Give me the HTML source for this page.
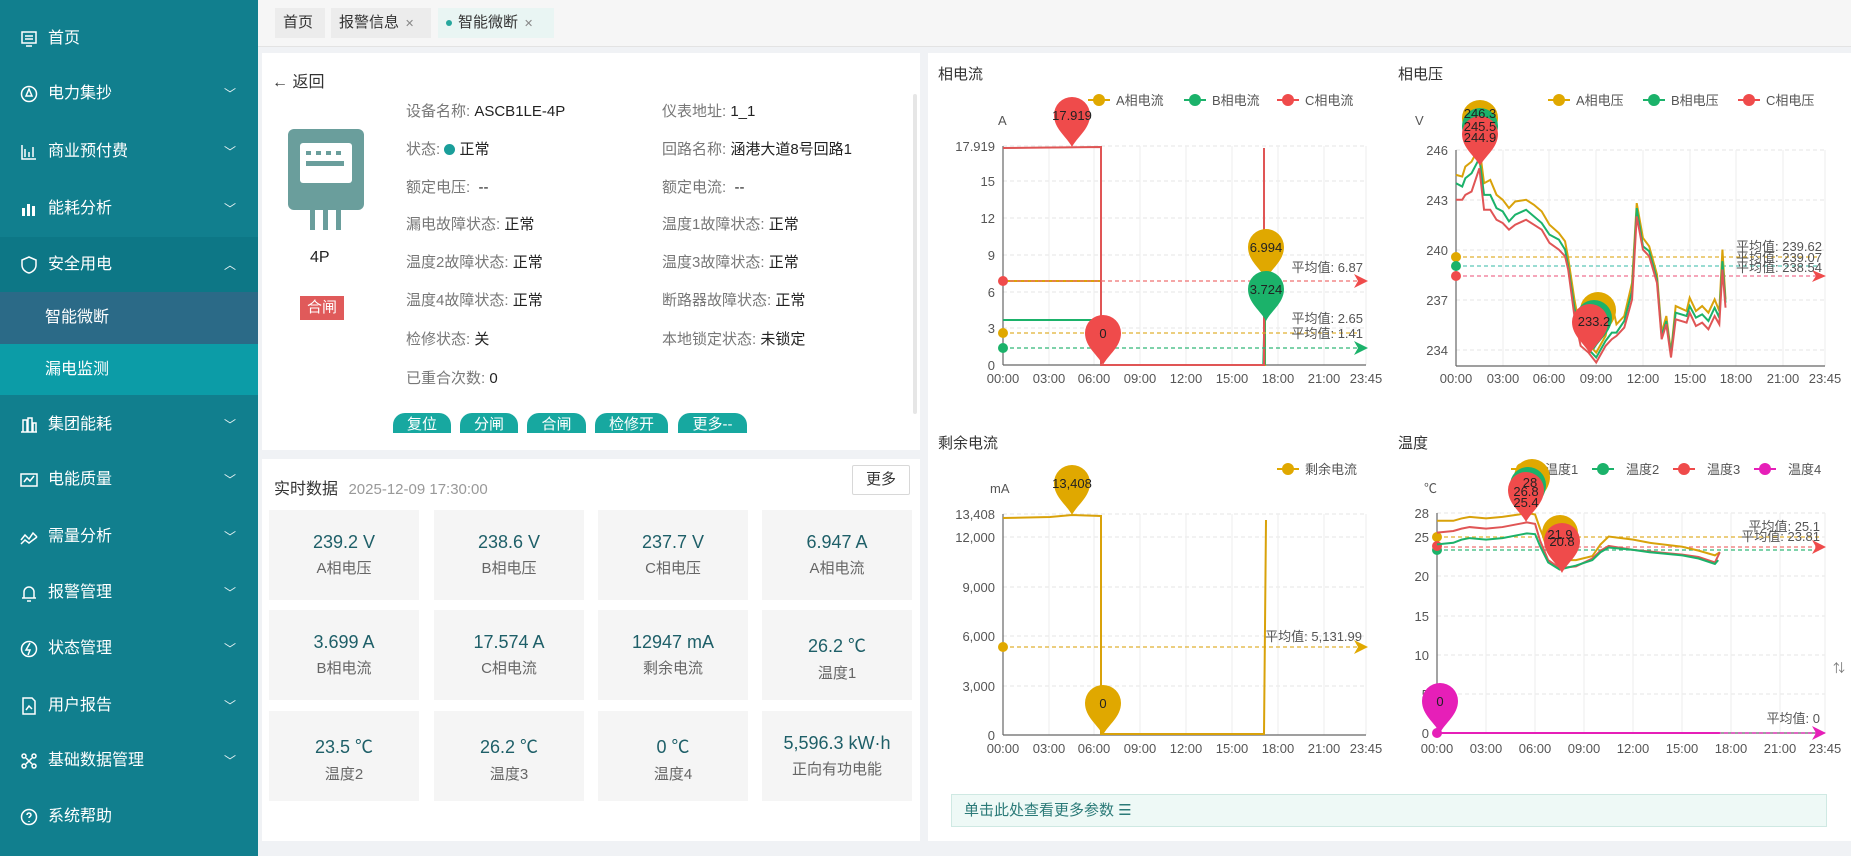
<!DOCTYPE html>
<html><head><meta charset="utf-8">
<style>
*{margin:0;padding:0;box-sizing:border-box}
body{width:1851px;height:856px;overflow:hidden;background:#f0f2f5;font-family:"Liberation Sans","Noto Sans CJK SC",sans-serif;position:relative;color:#333}
.abs{position:absolute}
#side{left:0;top:0;width:258px;height:856px;background:#117f8e}
.mi{position:absolute;left:0;width:258px;height:56px;color:#fff;font-size:16px;line-height:56px;padding-left:48px}
.mi .ic{position:absolute;left:20px;top:19px;width:18px;height:18px}
.mi .ar{position:absolute;right:22px;top:0;font-size:12px;color:#e8f4f5}
.tab{position:absolute;top:8px;height:30px;line-height:30px;font-size:15px;background:#ececec;color:#333;padding:0 8px}
.tab small{font-size:11px;color:#888;margin-left:6px}
.panel{position:absolute;background:#fff}
.lb{position:absolute;font-size:15px;color:#777;white-space:nowrap}
.lb b{font-weight:normal;color:#222}
.btn{position:absolute;top:413px;height:20px;background:#17a8a0;color:#fff;font-size:15px;line-height:24px;text-align:center;border-radius:12px 12px 0 0;overflow:hidden}
.card{position:absolute;width:150px;height:90px;background:#f5f5f5;text-align:center}
.card .v{margin-top:22px;font-size:18px;color:#1e5f68}
.card .l{margin-top:4px;font-size:15px;color:#666}
svg text{font-family:"Liberation Sans","Noto Sans CJK SC",sans-serif}
</style></head><body>

<div id="side" class="abs">
  <div class="abs" style="left:0;top:237px;width:258px;height:56px;background:#0d7786"></div>
  <div class="abs" style="left:0;top:292px;width:258px;height:52px;background:#2b6a87"></div>
  <div class="abs" style="left:0;top:344px;width:258px;height:51px;background:#0c9ca7"></div>
  <div class="mi" style="top:11px"><svg class="ic" viewBox="0 0 18 18" fill="none" stroke="#fff" stroke-width="1.5"><rect x="2" y="2" width="14" height="11"/><path d="M6 16h6M5 6h8M5 9h8"/></svg>首页</div>
  <div class="mi" style="top:66px"><svg class="ic" viewBox="0 0 18 18" fill="none" stroke="#fff" stroke-width="1.5"><circle cx="9" cy="9" r="7.5"/><path d="M9 4l-3 7h6z"/></svg>电力集抄<span class="ar">﹀</span></div>
  <div class="mi" style="top:124px"><svg class="ic" viewBox="0 0 18 18" fill="none" stroke="#fff" stroke-width="1.5"><path d="M2 2v14h14M5 14V6M9 14V9M13 14V4"/></svg>商业预付费<span class="ar">﹀</span></div>
  <div class="mi" style="top:181px"><svg class="ic" viewBox="0 0 18 18" fill="#fff"><rect x="2" y="8" width="3" height="8"/><rect x="7" y="4" width="3" height="12"/><rect x="12" y="6" width="3" height="10"/></svg>能耗分析<span class="ar">﹀</span></div>
  <div class="mi" style="top:237px"><svg class="ic" viewBox="0 0 18 18" fill="none" stroke="#fff" stroke-width="1.5"><path d="M9 1l7 3v5c0 4-3 7-7 8-4-1-7-4-7-8V4z"/></svg>安全用电<span class="ar">︿</span></div>
  <div class="mi" style="top:292px;height:52px;line-height:52px;padding-left:45px">智能微断</div>
  <div class="mi" style="top:344px;height:51px;line-height:51px;padding-left:45px">漏电监测</div>
  <div class="mi" style="top:397px"><svg class="ic" viewBox="0 0 18 18" fill="none" stroke="#fff" stroke-width="1.5"><path d="M1 16h16M3 16V4h4v12M8 16V2h4v14M13 16V7h3v9"/></svg>集团能耗<span class="ar">﹀</span></div>
  <div class="mi" style="top:452px"><svg class="ic" viewBox="0 0 18 18" fill="none" stroke="#fff" stroke-width="1.5"><rect x="1" y="3" width="16" height="12"/><path d="M4 11l3-4 3 3 4-5"/></svg>电能质量<span class="ar">﹀</span></div>
  <div class="mi" style="top:509px"><svg class="ic" viewBox="0 0 18 18" fill="none" stroke="#fff" stroke-width="1.5"><path d="M1 12l4-5 4 4 4-6 4 4M1 16l4-4 4 3 8-6"/></svg>需量分析<span class="ar">﹀</span></div>
  <div class="mi" style="top:565px"><svg class="ic" viewBox="0 0 18 18" fill="none" stroke="#fff" stroke-width="1.5"><path d="M4 14V8a5 5 0 0110 0v6M2 14h14M7 17h4"/></svg>报警管理<span class="ar">﹀</span></div>
  <div class="mi" style="top:621px"><svg class="ic" viewBox="0 0 18 18" fill="none" stroke="#fff" stroke-width="1.5"><circle cx="9" cy="9" r="7.5"/><path d="M10 3l-4 7h4l-2 5"/></svg>状态管理<span class="ar">﹀</span></div>
  <div class="mi" style="top:678px"><svg class="ic" viewBox="0 0 18 18" fill="none" stroke="#fff" stroke-width="1.5"><path d="M3 1h9l3 3v13H3z"/><path d="M6 13l3-4 3 3"/></svg>用户报告<span class="ar">﹀</span></div>
  <div class="mi" style="top:733px"><svg class="ic" viewBox="0 0 18 18" fill="none" stroke="#fff" stroke-width="1.5"><circle cx="4" cy="4" r="2"/><circle cx="14" cy="4" r="2"/><circle cx="4" cy="14" r="2"/><circle cx="14" cy="14" r="2"/><path d="M6 6l6 6M12 6l-6 6"/></svg>基础数据管理<span class="ar">﹀</span></div>
  <div class="mi" style="top:789px"><svg class="ic" viewBox="0 0 18 18" fill="none" stroke="#fff" stroke-width="1.5"><circle cx="9" cy="9" r="7.5"/><path d="M7 7a2 2 0 114 0c0 1.5-2 1.5-2 3M9 13v1"/></svg>系统帮助</div>
</div>

<div class="abs" style="left:258px;top:0;width:1593px;height:47px;background:#f6f6f6;border-bottom:1px solid #e3e3e3"></div>
<div class="tab" style="left:275px;width:50px">首页</div>
<div class="tab" style="left:331px;width:100px">报警信息<small>✕</small></div>
<div class="tab" style="left:438px;width:116px;background:#e9f5f3"><span style="display:inline-block;width:6px;height:6px;border-radius:3px;background:#27a79d;margin-right:6px;vertical-align:middle"></span>智能微断<small>✕</small></div>

<div class="panel" style="left:262px;top:53px;width:658px;height:397px"></div>
<div class="lb" style="left:272px;top:68px;color:#333;font-size:16px">← 返回</div>
<svg class="abs" style="left:288px;top:129px" width="76" height="102" viewBox="0 0 76 102">
  <rect x="0" y="0" width="76" height="81" rx="6" fill="#6a9e9c"/>
  <rect x="12" y="14" width="52" height="40" rx="3" fill="#fff"/>
  <rect x="18" y="22" width="5" height="4" fill="#6a9e9c"/><rect x="28" y="22" width="5" height="4" fill="#6a9e9c"/><rect x="38" y="22" width="5" height="4" fill="#6a9e9c"/><rect x="48" y="22" width="5" height="4" fill="#6a9e9c"/>
  <rect x="18" y="32" width="38" height="5" fill="#6a9e9c"/>
  <rect x="22" y="81" width="5" height="20" fill="#6a9e9c"/><rect x="35" y="81" width="5" height="20" fill="#6a9e9c"/><rect x="48" y="81" width="5" height="20" fill="#6a9e9c"/>
</svg>
<div class="lb" style="left:310px;top:249px;color:#222;font-size:16px">4P</div>
<div class="abs" style="left:300px;top:296px;width:44px;height:24px;background:#e05a5a;color:#fff;font-size:15px;line-height:24px;text-align:center">合闸</div>

<div class="lb" style="left:406px;top:100px">设备名称: <b>ASCB1LE-4P</b></div>
<div class="lb" style="left:662px;top:100px">仪表地址: <b>1_1</b></div>
<div class="lb" style="left:406px;top:138px">状态: <span style="display:inline-block;width:11px;height:11px;border-radius:6px;background:#1a9e9a;vertical-align:-1px"></span> <b>正常</b></div>
<div class="lb" style="left:662px;top:138px">回路名称: <b>涵港大道8号回路1</b></div>
<div class="lb" style="left:406px;top:176px">额定电压: &nbsp;<b>--</b></div>
<div class="lb" style="left:662px;top:176px">额定电流: &nbsp;<b>--</b></div>
<div class="lb" style="left:406px;top:213px">漏电故障状态: <b>正常</b></div>
<div class="lb" style="left:662px;top:213px">温度1故障状态: <b>正常</b></div>
<div class="lb" style="left:406px;top:251px">温度2故障状态: <b>正常</b></div>
<div class="lb" style="left:662px;top:251px">温度3故障状态: <b>正常</b></div>
<div class="lb" style="left:406px;top:289px">温度4故障状态: <b>正常</b></div>
<div class="lb" style="left:662px;top:289px">断路器故障状态: <b>正常</b></div>
<div class="lb" style="left:406px;top:328px">检修状态: <b>关</b></div>
<div class="lb" style="left:662px;top:328px">本地锁定状态: <b>未锁定</b></div>
<div class="lb" style="left:406px;top:367px">已重合次数: <b>0</b></div>
<div class="btn" style="left:393px;width:58px">复位</div>
<div class="btn" style="left:460px;width:58px">分闸</div>
<div class="btn" style="left:527px;width:59px">合闸</div>
<div class="btn" style="left:595px;width:73px">检修开</div>
<div class="btn" style="left:678px;width:69px">更多--</div>
<div class="abs" style="left:913px;top:94px;width:4px;height:320px;background:#e6e6e6;border-radius:2px"></div>

<div class="panel" style="left:262px;top:459px;width:658px;height:382px"></div>
<div class="lb" style="left:274px;top:475px;color:#333;font-size:16px">实时数据 <span style="color:#999;font-size:15px;margin-left:6px">2025-12-09 17:30:00</span></div>
<div class="abs" style="left:852px;top:465px;width:58px;height:30px;border:1px solid #d8d8d8;border-radius:2px;font-size:15px;line-height:28px;text-align:center;color:#333">更多</div>
<div class="card" style="left:269px;top:510px"><div class="v">239.2 V</div><div class="l">A相电压</div></div>
<div class="card" style="left:434px;top:510px"><div class="v">238.6 V</div><div class="l">B相电压</div></div>
<div class="card" style="left:598px;top:510px"><div class="v">237.7 V</div><div class="l">C相电压</div></div>
<div class="card" style="left:762px;top:510px"><div class="v">6.947 A</div><div class="l">A相电流</div></div>
<div class="card" style="left:269px;top:610px"><div class="v">3.699 A</div><div class="l">B相电流</div></div>
<div class="card" style="left:434px;top:610px"><div class="v">17.574 A</div><div class="l">C相电流</div></div>
<div class="card" style="left:598px;top:610px"><div class="v">12947 mA</div><div class="l">剩余电流</div></div>
<div class="card" style="left:762px;top:610px"><div class="v">26.2 ℃</div><div class="l">温度1</div></div>
<div class="card" style="left:269px;top:711px"><div class="v">23.5 ℃</div><div class="l">温度2</div></div>
<div class="card" style="left:434px;top:711px"><div class="v">26.2 ℃</div><div class="l">温度3</div></div>
<div class="card" style="left:598px;top:711px"><div class="v">0 ℃</div><div class="l">温度4</div></div>
<div class="card" style="left:762px;top:711px"><div class="v">5,596.3 kW·h</div><div class="l">正向有功电能</div></div>

<div class="panel" style="left:928px;top:53px;width:923px;height:788px"></div>
<div class="abs" style="left:951px;top:794px;width:876px;height:33px;background:#eef9f6;border:1px solid #cfe9e3;color:#2b7a78;font-size:15px;line-height:31px;padding-left:12px">单击此处查看更多参数 ☰</div>

<svg class="abs" style="left:0;top:0" width="1851" height="856" viewBox="0 0 1851 856">
<defs>
  <path id="pin" d="M0,32 C-5,22 -18,14 -18,0 A18,18 0 1,1 18,0 C18,14 5,22 0,32Z"/>
</defs>
<g font-size="14" fill="#333">
  <text x="938" y="79" font-size="15">相电流</text>
  <text x="1398" y="79" font-size="15">相电压</text>
  <text x="938" y="448" font-size="15">剩余电流</text>
  <text x="1398" y="448" font-size="15">温度</text>
</g>
<g stroke="#e6e6e6" stroke-dasharray="4,3">
  <path d="M1003 146H1366M1003 181H1366M1003 218H1366M1003 255H1366M1003 292H1366M1003 328H1366"/>
  <path d="M1456 150H1825M1456 200H1825M1456 250H1825M1456 300H1825M1456 350H1825"/>
  <path d="M1003 514H1366M1003 537H1366M1003 587H1366M1003 636H1366M1003 686H1366"/>
  <path d="M1437 513H1825M1437 537H1825M1437 576H1825M1437 616H1825M1437 655H1825M1437 694H1825"/>
</g>
<g stroke="#eeeeee">
  <path d="M1049 146V365M1094 146V365M1140 146V365M1186 146V365M1232 146V365M1278 146V365M1324 146V365M1366 146V365"/>
  <path d="M1503 150V366M1549 150V366M1596 150V366M1643 150V366M1690 150V366M1736 150V366M1783 150V366M1825 150V366"/>
  <path d="M1049 514V735M1094 514V735M1140 514V735M1186 514V735M1232 514V735M1278 514V735M1324 514V735M1366 514V735"/>
  <path d="M1486 513V733M1535 513V733M1584 513V733M1633 513V733M1682 513V733M1731 513V733M1780 513V733M1825 513V733"/>
</g>
<g stroke="#666" stroke-width="1.2">
  <path d="M1003 365H1366M1003 146V365"/><path d="M1456 366H1825M1456 150V366"/>
  <path d="M1003 735H1366M1003 514V735"/><path d="M1437 733H1825M1437 513V733"/>
</g>
<g font-size="13" fill="#555" text-anchor="end">
  <text x="995" y="151">17.919</text><text x="995" y="186">15</text><text x="995" y="223">12</text><text x="995" y="260">9</text><text x="995" y="297">6</text><text x="995" y="333">3</text><text x="995" y="370">0</text>
  <text x="1448" y="155">246</text><text x="1448" y="205">243</text><text x="1448" y="255">240</text><text x="1448" y="305">237</text><text x="1448" y="355">234</text>
  <text x="995" y="519">13,408</text><text x="995" y="542">12,000</text><text x="995" y="592">9,000</text><text x="995" y="641">6,000</text><text x="995" y="691">3,000</text><text x="995" y="740">0</text>
  <text x="1429" y="518">28</text><text x="1429" y="542">25</text><text x="1429" y="581">20</text><text x="1429" y="621">15</text><text x="1429" y="660">10</text><text x="1429" y="699">5</text><text x="1429" y="738">0</text>
</g>
<g font-size="13" fill="#555" text-anchor="middle">
  <text x="1003" y="383">00:00</text><text x="1049" y="383">03:00</text><text x="1094" y="383">06:00</text><text x="1140" y="383">09:00</text><text x="1186" y="383">12:00</text><text x="1232" y="383">15:00</text><text x="1278" y="383">18:00</text><text x="1324" y="383">21:00</text><text x="1366" y="383">23:45</text>
  <text x="1456" y="383">00:00</text><text x="1503" y="383">03:00</text><text x="1549" y="383">06:00</text><text x="1596" y="383">09:00</text><text x="1643" y="383">12:00</text><text x="1690" y="383">15:00</text><text x="1736" y="383">18:00</text><text x="1783" y="383">21:00</text><text x="1825" y="383">23:45</text>
  <text x="1003" y="753">00:00</text><text x="1049" y="753">03:00</text><text x="1094" y="753">06:00</text><text x="1140" y="753">09:00</text><text x="1186" y="753">12:00</text><text x="1232" y="753">15:00</text><text x="1278" y="753">18:00</text><text x="1324" y="753">21:00</text><text x="1366" y="753">23:45</text>
  <text x="1437" y="753">00:00</text><text x="1486" y="753">03:00</text><text x="1535" y="753">06:00</text><text x="1584" y="753">09:00</text><text x="1633" y="753">12:00</text><text x="1682" y="753">15:00</text><text x="1731" y="753">18:00</text><text x="1780" y="753">21:00</text><text x="1825" y="753">23:45</text>
</g>
<g font-size="13" fill="#555">
  <text x="998" y="125">A</text><text x="1415" y="125">V</text><text x="990" y="493">mA</text><text x="1424" y="493">℃</text>
</g>
<g font-size="13" fill="#555" stroke-width="2">
  <path d="M1088 100h22" stroke="#e0a800"/><circle cx="1099" cy="100" r="6" fill="#e0a800"/><text x="1116" y="105">A相电流</text>
  <path d="M1184 100h22" stroke="#1bb26a"/><circle cx="1195" cy="100" r="6" fill="#1bb26a"/><text x="1212" y="105">B相电流</text>
  <path d="M1277 100h22" stroke="#ef4b4b"/><circle cx="1288" cy="100" r="6" fill="#ef4b4b"/><text x="1305" y="105">C相电流</text>
  <path d="M1548 100h22" stroke="#e0a800"/><circle cx="1559" cy="100" r="6" fill="#e0a800"/><text x="1576" y="105">A相电压</text>
  <path d="M1643 100h22" stroke="#1bb26a"/><circle cx="1654" cy="100" r="6" fill="#1bb26a"/><text x="1671" y="105">B相电压</text>
  <path d="M1738 100h22" stroke="#ef4b4b"/><circle cx="1749" cy="100" r="6" fill="#ef4b4b"/><text x="1766" y="105">C相电压</text>
  <path d="M1277 469h22" stroke="#e0a800"/><circle cx="1288" cy="469" r="6" fill="#e0a800"/><text x="1305" y="474">剩余电流</text>
  <path d="M1511 469h22" stroke="#e0a800"/><circle cx="1522" cy="469" r="6" fill="#e0a800"/><text x="1545" y="474">温度1</text>
  <path d="M1592 469h22" stroke="#1bb26a"/><circle cx="1603" cy="469" r="6" fill="#1bb26a"/><text x="1626" y="474">温度2</text>
  <path d="M1673 469h22" stroke="#ef4b4b"/><circle cx="1684" cy="469" r="6" fill="#ef4b4b"/><text x="1707" y="474">温度3</text>
  <path d="M1754 469h22" stroke="#e61fb8"/><circle cx="1765" cy="469" r="6" fill="#e61fb8"/><text x="1788" y="474">温度4</text>
</g>

<g fill="none" stroke-width="2">
  <path d="M1003 320H1100" stroke="#1bb26a"/>
  <path d="M1003 281H1101V365H1265V280" stroke="#d9a20a"/>
  <path d="M1003 148L1101 147V365H1263L1265 289V365" stroke="#1bb26a" stroke-width="1.5"/>
  <path d="M1003 148L1101 147V365H1264V148" stroke="#e05555"/>
</g>
<g stroke-dasharray="4,3" stroke-width="1.3">
  <path d="M1003 281H1360" stroke="#ef7070"/><path d="M1003 333H1360" stroke="#e0b030"/><path d="M1003 348H1360" stroke="#30b878"/>
</g>
<circle cx="1003" cy="281" r="5" fill="#ef4b4b"/><circle cx="1003" cy="333" r="5" fill="#e0a800"/><circle cx="1003" cy="348" r="5" fill="#1bb26a"/>
<path d="M1354 274l14 7-14 7 4-7z" fill="#ef4b4b"/><path d="M1354 341l14 7-14 7 4-7z" fill="#1bb26a"/>
<g font-size="13" fill="#555" text-anchor="end"><text x="1363" y="272">平均值: 6.87</text><text x="1363" y="323">平均值: 2.65</text><text x="1363" y="338">平均值: 1.41</text></g>
<use href="#pin" transform="translate(1072,115)" fill="#ef4b4b"/>
<use href="#pin" transform="translate(1103,333)" fill="#ef4b4b"/>
<use href="#pin" transform="translate(1266,247)" fill="#e0a800"/>
<use href="#pin" transform="translate(1266,289)" fill="#1bb26a"/>
<g font-size="13" fill="#222" text-anchor="middle"><text x="1072" y="120">17.919</text><text x="1103" y="338">0</text><text x="1266" y="252">6.994</text><text x="1266" y="294">3.724</text></g>

<g stroke-dasharray="4,3" stroke-width="1.3">
  <path d="M1456 257H1820" stroke="#e0b030"/><path d="M1456 266H1820" stroke="#5cc8b8"/><path d="M1456 276H1820" stroke="#ef7090"/>
</g>
<circle cx="1456" cy="257" r="5" fill="#e0a800"/><circle cx="1456" cy="266" r="5" fill="#1bb26a"/><circle cx="1456" cy="276" r="5" fill="#ef4b4b"/>
<path d="M1812 270l14 6-14 6 4-6z" fill="#ef4b4b"/>
<g fill="none" stroke-width="2" transform="translate(1456,150) scale(15.58,-16.6) translate(0,-246)">
  <polyline vector-effect="non-scaling-stroke" stroke="#d9a20a" points="0,244.5 0.4,244.4 0.6,245 1,245.3 1.5,246.2 1.8,244 2.2,244.2 2.6,243.3 3,243 3.4,242.5 3.8,242.9 4.5,243 5,242.7 5.5,242.3 6,241.5 6.6,241 7,240.5 7.2,239.5 7.6,237 8,235 8.5,234.3 9,233.8 9.6,234.8 10,236.8 10.3,235.5 10.8,236 11.3,238 11.6,242.8 12,240.7 12.4,240.2 12.9,238.5 13.2,235 13.5,236 13.8,233.8 14.1,236.6 14.8,236.3 15,237.1 15.4,236.3 15.8,236.6 16.2,236.2 16.6,237 16.9,236.3 17.1,240 17.3,237"/>
  <polyline vector-effect="non-scaling-stroke" stroke="#1bb26a" points="0,244 0.4,243.8 0.6,244.3 1,244.6 1.5,245.5 1.8,243.3 2.2,243.3 2.6,242.5 3,242.3 3.4,241.7 3.8,242.1 4.5,242.4 5,242 5.5,241.6 6,240.9 6.6,240.6 7,240 7.2,239 7.6,236.5 8,234.6 8.5,234 9,233.5 9.6,234.5 10,235 10.3,235 10.8,235.7 11.3,237.5 11.6,242.5 12,240.2 12.4,239.9 12.9,238.2 13.2,234.8 13.5,235.7 13.8,233.7 14.1,236.2 14.8,236 15,236.6 15.4,235.9 15.8,236.1 16.2,235.7 16.6,236.5 16.9,235.9 17.1,239.3 17.3,236.8"/>
  <polyline vector-effect="non-scaling-stroke" stroke="#e05555" points="0,243 0.4,243 0.6,243.3 1,243.5 1.5,244.9 1.8,242.4 2.2,242.4 2.6,241.8 3,241.6 3.4,241.2 3.8,241.5 4.5,241.8 5,241.5 5.5,241.2 6,240.4 6.6,240 7,239.6 7.2,238.8 7.6,236 8,234.2 8.5,233.8 9,233.2 9.6,234.2 10,234.6 10.3,234.8 10.8,235.3 11.3,237 11.6,242 12,240 12.4,239.6 12.9,238 13.2,234.6 13.5,235.5 13.8,233.5 14.1,235.8 14.8,235.6 15,236.2 15.4,235.4 15.8,235.6 16.2,235.2 16.6,236 16.9,235.5 17.1,238.8 17.3,236.5"/>
</g>
<g font-size="13" fill="#555" text-anchor="end"><text x="1822" y="251">平均值: 239.62</text><text x="1822" y="262">平均值: 239.07</text><text x="1822" y="272">平均值: 238.54</text></g>
<use href="#pin" transform="translate(1480,118)" fill="#e0a800"/>
<use href="#pin" transform="translate(1480,126)" fill="#1bb26a"/>
<use href="#pin" transform="translate(1480,134)" fill="#ef4b4b"/>
<use href="#pin" transform="translate(1598,310)" fill="#e0a800"/>
<use href="#pin" transform="translate(1594,318)" fill="#1bb26a"/>
<use href="#pin" transform="translate(1590,322)" fill="#ef4b4b"/>
<g font-size="13" fill="#222" text-anchor="middle"><text x="1480" y="118">246.3</text><text x="1480" y="131">245.5</text><text x="1480" y="142">244.9</text><text x="1594" y="326">233.2</text></g>

<path d="M1003 647H1360" stroke="#e0b030" stroke-width="1.3" stroke-dasharray="4,3"/>
<circle cx="1003" cy="647" r="5" fill="#e0a800"/>
<path d="M1354 640l14 7-14 7 4-7z" fill="#e0a800"/>
<path d="M1003 518L1050 517 1072 515 1101 516V734H1264L1266 520" fill="none" stroke="#d9a20a" stroke-width="2"/>
<text x="1362" y="641" font-size="13" fill="#555" text-anchor="end">平均值: 5,131.99</text>
<use href="#pin" transform="translate(1072,483)" fill="#e0a800"/>
<use href="#pin" transform="translate(1103,703)" fill="#e0a800"/>
<g font-size="13" fill="#222" text-anchor="middle"><text x="1072" y="488">13,408</text><text x="1103" y="708">0</text></g>

<g stroke-dasharray="4,3" stroke-width="1.3">
  <path d="M1437 537H1820" stroke="#e0b030"/><path d="M1437 547H1820" stroke="#ef7070"/><path d="M1437 550H1820" stroke="#30b878"/><path d="M1437 733H1820" stroke="#e61fb8"/>
</g>
<circle cx="1437" cy="537" r="5" fill="#e0a800"/><circle cx="1437" cy="550" r="5" fill="#1bb26a"/><circle cx="1437" cy="546" r="5" fill="#ef4b4b"/><circle cx="1437" cy="733" r="5" fill="#e61fb8"/>
<path d="M1812 540l14 7-14 7 4-7z" fill="#ef4b4b"/><path d="M1812 726l14 7-14 7 4-7z" fill="#e61fb8"/>
<g fill="none" stroke-width="2" transform="translate(1437,733) scale(16.35,-7.86)">
  <polyline vector-effect="non-scaling-stroke" stroke="#d9a20a" points="0,27 1,27 1.5,27.3 2,27.5 3,27.3 4,27.5 5,27.8 5.5,28 6,27.8 6.3,26 6.8,23.5 7.5,22 8.5,22 9.5,22.5 10,24 10.5,25 12,24.6 13,24.2 15,23.7 16,23.2 17,22.6 17.3,23"/>
  <polyline vector-effect="non-scaling-stroke" stroke="#e05555" points="0,25.5 1,25.7 1.5,26 2,26.2 3,26 4,26.2 5,26.6 5.5,26.8 6,26.6 6.3,24.5 6.8,22 7.5,21 8.5,21.2 9.5,22.2 10,23.2 10.5,23.8 12,23.3 13,23.1 15,22.7 16,22.4 17,21.7 17.3,23"/>
  <polyline vector-effect="non-scaling-stroke" stroke="#1bb26a" points="0,24 1,24.2 1.5,24.6 2,24.8 3,24.6 4,24.8 5,25.2 5.5,25.4 6,25.3 6.3,23.8 6.8,21.7 7.5,20.8 8.5,21.3 9.5,22 10,23 10.5,23.6 12,23.3 13,23 15,22.6 16,22.2 17,21.5 17.2,22"/>
  <polyline vector-effect="non-scaling-stroke" stroke="#e61fb8" points="0,0 17.3,0"/>
</g>
<g font-size="13" fill="#555" text-anchor="end"><text x="1820" y="531">平均值: 25.1</text><text x="1820" y="541">平均值: 23.81</text><text x="1820" y="723">平均值: 0</text></g>
<use href="#pin" transform="translate(1532,477)" fill="#e0a800"/>
<use href="#pin" transform="translate(1528,485)" fill="#1bb26a"/>
<use href="#pin" transform="translate(1526,490)" fill="#ef4b4b"/>
<use href="#pin" transform="translate(1560,533)" fill="#e0a800"/>
<use href="#pin" transform="translate(1562,541)" fill="#ef4b4b"/>
<use href="#pin" transform="translate(1440,701)" fill="#e61fb8"/>
<g font-size="13" fill="#222" text-anchor="middle"><text x="1530" y="487">28</text><text x="1526" y="496">26.8</text><text x="1526" y="507">25.4</text><text x="1560" y="539">21.9</text><text x="1562" y="546">20.8</text><text x="1440" y="706">0</text></g>
<text x="1833" y="672" font-size="12" fill="#777">⇅</text>
</svg>
</body></html>
